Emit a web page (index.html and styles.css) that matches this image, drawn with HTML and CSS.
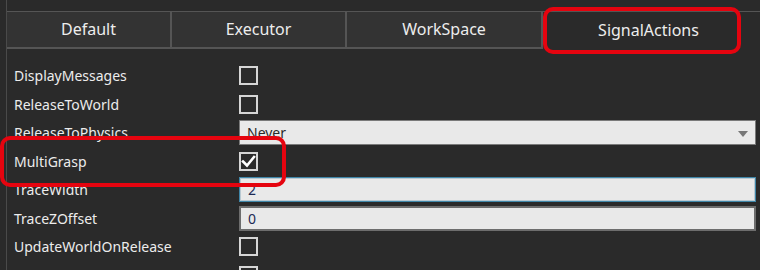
FILE: index.html
```html
<!DOCTYPE html>
<html>
<head>
<meta charset="utf-8">
<link rel="stylesheet" href="styles.css">
</head>
<body>
<div class="panel">
  <div class="tabs">
    <div class="tab tab-default">Default</div>
    <div class="tab tab-executor">Executor</div>
    <div class="tab tab-workspace">WorkSpace</div>
    <div class="tab tab-signal selected">SignalActions</div>
  </div>
  <div class="props">
    <div class="label">DisplayMessages</div>
    <div class="value"><span class="check"></span></div>
    <div class="label">ReleaseToWorld</div>
    <div class="value"><span class="check"></span></div>
    <div class="label">ReleaseToPhysics</div>
    <div class="value"><div class="combo"><span>Never</span><span class="arrow"></span></div></div>
    <div class="label">MultiGrasp</div>
    <div class="value"><span class="check checked"><svg width="15" height="15" viewBox="0 0 15 15"><path d="M2 7.5 L6 11.5 L13 3" fill="none" stroke="#ffffff" stroke-width="2.6" stroke-linecap="square"/></svg></span></div>
    <div class="label">TraceWidth</div>
    <div class="value"><div class="textbox focused">2</div></div>
    <div class="label">TraceZOffset</div>
    <div class="value"><div class="textbox">0</div></div>
    <div class="label">UpdateWorldOnRelease</div>
    <div class="value"><span class="check"></span></div>
    <div class="label">&nbsp;</div>
    <div class="value"><span class="check"></span></div>
  </div>
</div>
<div class="highlight hl-tab"></div>
<div class="highlight hl-row"></div>
</body>
</html>
```
FILE: styles.css
```css
html, body {
  margin: 0;
  padding: 0;
  background: #2a2a2a;
  overflow: hidden;
  height: 270px;
}
body {
  font-family: "Noto Sans", "Open Sans", sans-serif;
  color: #ececec;
  position: relative;
}
.panel {
  margin-left: 6px;
  border-left: 1px solid #4a4a4a;
  height: 270px;
  padding-top: 11px;
  box-sizing: border-box;
  overflow: hidden;
}
.tabs {
  display: flex;
  height: 37px;
  border-top: 1px solid #555555;
  box-sizing: content-box;
}
.tab {
  background: #333333;
  border-right: 2px solid #555555;
  border-bottom: 2px solid #555555;
  display: flex;
  align-items: center;
  justify-content: center;
  font-size: 16px;
  color: #ededed;
  box-sizing: border-box;
  padding-bottom: 1px;
}
.tab-default { width: 165px; }
.tab-executor { width: 175px; }
.tab-workspace { width: 196px; }
.tab-signal { flex: 1; }
.tab.selected {
  background: #2a2a2a;
  border-right: none;
  border-bottom: none;
  padding-right: 6px;
}
.props {
  display: grid;
  grid-template-columns: 232px 517px;
  grid-auto-rows: 28.5px;
  padding-top: 12.5px;
}
.label {
  padding-left: 7px;
  font-size: 14px;
  display: flex;
  align-items: center;
  color: #ececec;
  white-space: nowrap;
}
.value {
  display: flex;
  align-items: center;
}
.check {
  width: 19px;
  height: 19px;
  box-sizing: border-box;
  border: 2px solid #d6d6d6;
  background: #2b2b2b;
  display: flex;
  align-items: center;
  justify-content: center;
}
.combo {
  width: 517px;
  height: 25px;
  box-sizing: border-box;
  border: 1px solid #7a7a7a;
  background: #e9e9e9;
  color: #2a2a2a;
  font-size: 14px;
  display: flex;
  align-items: center;
  justify-content: space-between;
  padding: 0 7px 0 7px;
}
.arrow {
  width: 0;
  height: 0;
  border-left: 5px solid transparent;
  border-right: 5px solid transparent;
  border-top: 6px solid #777777;
  margin-top: 2px;
}
.textbox {
  width: 517px;
  height: 25px;
  box-sizing: border-box;
  border: 2px solid #6d6d6d;
  background: #e9e9e9;
  color: #1d2a55;
  font-size: 14px;
  display: flex;
  align-items: center;
  padding-left: 7px;
}
.textbox.focused {
  border: 1px solid #3f86a8;
  box-shadow: inset 0 0 0 1px #b9c9d2;
  padding-left: 8px;
}
.highlight {
  position: absolute;
  border: 4px solid #e5040f;
  border-radius: 10px;
  box-sizing: border-box;
}
.hl-tab {
  left: 543px;
  top: 7px;
  width: 198px;
  height: 47px;
}
.hl-row {
  left: 0;
  top: 136px;
  width: 286px;
  height: 51px;
}
```
